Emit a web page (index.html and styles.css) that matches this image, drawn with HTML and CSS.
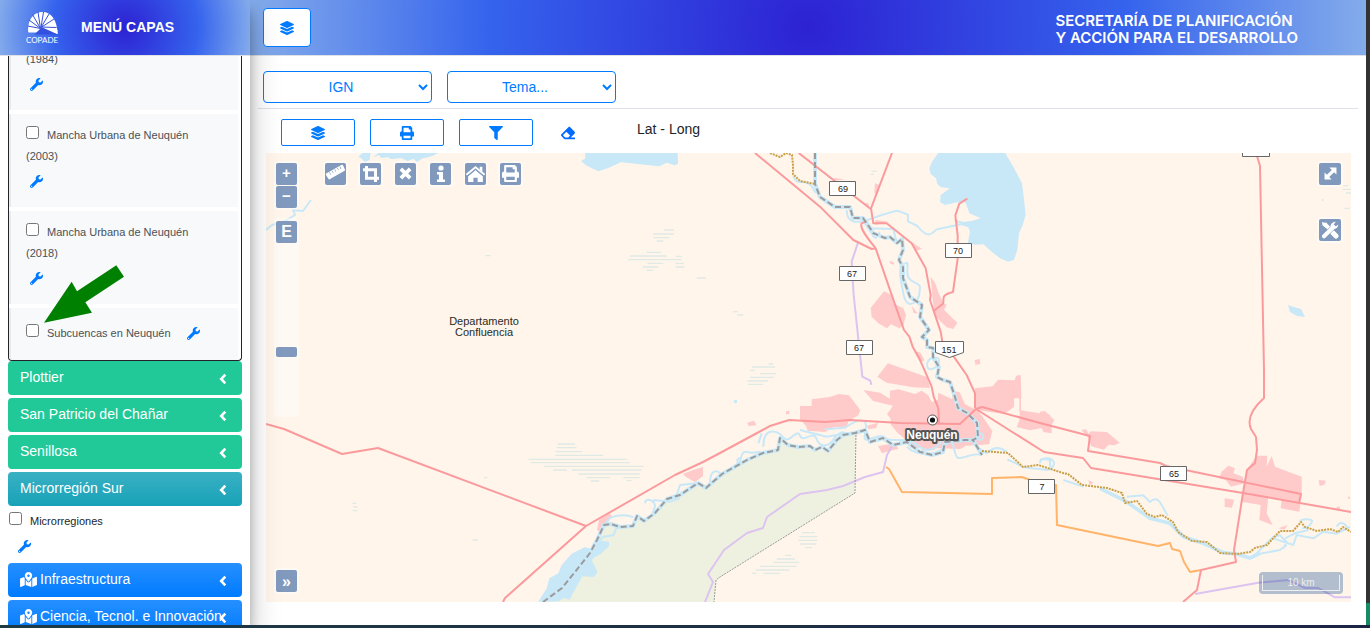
FILE: index.html
```html
<!DOCTYPE html>
<html lang="es">
<head>
<meta charset="utf-8">
<title>Menú capas</title>
<link rel="stylesheet" href="styles.css">
</head>
<body>
<svg class="sprite" aria-hidden="true">
  <symbol id="i-layers" viewBox="0 0 512 512"><path d="M12.41 148.02l232.94 105.67c6.8 3.09 14.49 3.09 21.29 0l232.94-105.67c16.55-7.51 16.55-32.52 0-40.03L266.65 2.31a25.607 25.607 0 0 0-21.29 0L12.41 107.98c-16.55 7.51-16.55 32.53 0 40.04zm487.18 88.28l-58.09-26.33-161.64 73.27c-7.56 3.43-15.59 5.17-23.86 5.17s-16.29-1.74-23.86-5.17L70.51 209.97l-58.1 26.33c-16.55 7.5-16.55 32.5 0 40l232.94 105.59c6.8 3.08 14.49 3.08 21.29 0L499.59 276.3c16.55-7.5 16.55-32.5 0-40zm0 127.8l-57.87-26.23-161.86 73.37c-7.56 3.43-15.59 5.17-23.86 5.17s-16.29-1.74-23.86-5.17L70.29 337.87 12.41 364.1c-16.55 7.5-16.55 32.5 0 40l232.94 105.59c6.8 3.08 14.49 3.08 21.29 0L499.59 404.1c16.55-7.5 16.55-32.5 0-40z"/></symbol>
  <symbol id="i-print" viewBox="0 0 512 512"><path fill-rule="evenodd" d="M448 192V77.25c0-8.49-3.37-16.62-9.37-22.63L393.37 9.37c-6-6-14.14-9.37-22.63-9.37H96C78.33 0 64 14.33 64 32v160c-35.35 0-64 28.65-64 64v112c0 8.84 7.16 16 16 16h48v96c0 17.67 14.33 32 32 32h320c17.67 0 32-14.33 32-32v-96h48c8.84 0 16-7.16 16-16V256c0-35.35-28.65-64-64-64zm-64 256H128v-96h256v96zm0-224H128V64h192v48c0 8.84 7.16 16 16 16h48v96z"/></symbol>
  <symbol id="i-filter" viewBox="0 0 512 512"><path d="M487.976 0H24.028C2.71 0-8.047 25.866 7.058 40.971L192 225.941V432c0 7.831 3.821 15.17 10.237 19.662l80 55.98C298.02 518.69 320 507.493 320 487.98V225.941l184.947-184.97C520.021 25.896 509.338 0 487.976 0z"/></symbol>
  <symbol id="i-wrench" viewBox="0 0 512 512"><path d="M507.73 109.1c-2.24-9.03-13.54-12.09-20.12-5.51l-74.36 74.36-67.88-11.31-11.31-67.88 74.36-74.36c6.62-6.62 3.43-17.9-5.66-20.16-47.38-11.74-99.55.91-136.58 37.93-39.64 39.64-50.55 97.1-34.05 147.2L18.74 402.76c-24.99 24.99-24.99 65.51 0 90.5 24.99 24.99 65.51 24.99 90.5 0l213.21-213.21c50.12 16.71 107.47 5.68 147.37-34.22 37.07-37.07 49.7-89.32 37.91-136.73zM64 472c-13.25 0-24-10.75-24-24 0-13.26 10.75-24 24-24s24 10.74 24 24c0 13.25-10.75 24-24 24z"/></symbol>
  <symbol id="i-marked" viewBox="0 0 576 512"><path d="M288 0c-69.59 0-126 56.41-126 126 0 56.26 82.35 158.8 113.9 196.02 6.39 7.54 17.82 7.54 24.2 0C331.65 284.8 414 182.26 414 126 414 56.41 357.59 0 288 0zm0 168c-23.2 0-42-18.8-42-42s18.8-42 42-42 42 18.8 42 42-18.8 42-42 42zM20.12 215.95A32.006 32.006 0 0 0 0 245.66v250.32c0 11.32 11.43 19.06 21.94 14.86L160 448V214.92c-8.84-15.98-16.07-31.54-21.25-46.42L20.12 215.95zM288 359.67c-14.07 0-27.38-6.18-36.51-16.96-19.66-23.2-40.57-49.62-59.49-76.72v182l192 64V266c-18.92 27.09-39.82 53.52-59.49 76.72-9.13 10.77-22.44 16.95-36.51 16.95zm266.06-198.51L416 224v288l139.88-55.95A31.996 31.996 0 0 0 576 426.34V176.02c0-11.32-11.43-19.06-21.94-14.86z"/></symbol>
  <symbol id="i-eraser" viewBox="0 0 512 512"><path fill-rule="evenodd" d="M497.941 273.941c18.745-18.745 18.745-49.137 0-67.882l-160-160c-18.745-18.745-49.136-18.746-67.883 0l-256 256c-18.745 18.745-18.745 49.137 0 67.882l96 96A48.004 48.004 0 0 0 144 480h356c6.627 0 12-5.373 12-12v-40c0-6.627-5.373-12-12-12H355.883l142.058-142.059zm-302.627-62.627l137.373 137.373L265.373 416H150.628l-80-80 124.686-124.686z"/></symbol>
  <symbol id="i-left" viewBox="0 0 8 12"><path d="M6.3 1.7 2.2 6l4.100 4.300" fill="none" stroke="currentColor" stroke-width="2.600"/></symbol>
  <symbol id="i-ruler" viewBox="0 0 22 22"><path fill-rule="evenodd" d="M.8 10.400 17.800.9a1 1 0 0 1 1.300.3l2.300 4.900a1 1 0 0 1-.4 1.300L4.600 16.800a1 1 0 0 1-1.300-.4L.4 11.700a1 1 0 0 1 .4-1.300zM4 9.300l1.400 2.600.6-.3-1.400-2.600zM7 7.600l1.200 2.200.6-.3-1.200-2.200zM9.800 6l1.400 2.600.6-.3-1.400-2.600zM12.700 4.400l1.200 2.200.6-.3-1.200-2.200zM15.400 2.900l1.400 2.600.6-.3-1.400-2.600z"/></symbol>
  <symbol id="i-crop" viewBox="0 0 18 18"><path d="M4.500 1v12.200H17M1 4.800h12.500V17" fill="none" stroke="currentColor" stroke-width="3"/></symbol>
  <symbol id="i-x" viewBox="0 0 14 14"><path d="M2 2l10 10M12 2 2 12" fill="none" stroke="currentColor" stroke-width="4"/></symbol>
  <symbol id="i-info" viewBox="0 0 12 18"><circle cx="6" cy="3" r="2.600"/><path d="M2 7h6v7.400h2V17H2v-2.600h2V9.600H2z"/></symbol>
  <symbol id="i-home" viewBox="0 0 20 17"><path d="M10 4.800 17 10.600V16h-5v-4H8v4H3v-5.400z"/><path d="M1.300 9.200 10 2l8.700 7.200" fill="none" stroke="currentColor" stroke-width="1.800"/><path d="M2.500 10.500 10 4.300l7.500 6.200" fill="none" stroke="#8099bd" stroke-width=".9"/><path d="M14 1.500h2.500v5L14 4.500z"/></symbol>
  <symbol id="i-expand" viewBox="0 0 12 12"><path d="M5 .5h6.500V7L9.300 4.800l-4.500 4.500L7 11.500H.5V5l2.200 2.200 4.500-4.500z"/></symbol>
  <symbol id="i-tools" viewBox="0 0 18 18"><path d="M3.500 2.500 15 15" fill="none" stroke="currentColor" stroke-width="4"/><path d="M12 12l3 3" fill="none" stroke="currentColor" stroke-width="5" stroke-linecap="round"/><path d="M1 1l3.500 1L6.500 6 5 7 1.600 4.500z"/><path d="M3 15.300 12 6.500" fill="none" stroke="#8099bd" stroke-width="5"/><path d="M3 15.300 12.500 6" fill="none" stroke="currentColor" stroke-width="4" stroke-linecap="round"/><path d="M14.800.7A5 5 0 0 0 9.800 7.500 5 5 0 0 0 17.300 3.500L14.600 5.600 12.700 3.500z"/></symbol>
</svg>

<div class="app">
  <aside class="sidebar">
    <header class="brand">
      <svg class="logo" viewBox="0 0 30 31" role="img" aria-label="COPADE">
        <path fill="#fff" d="M0 18.500C0 7 6 0 14.500 0 23 0 29.500 8 29.500 22L20 20.500H.5z"/>
        <path fill="#3450e0" d="M12.500 16.500 6.500 22.500H30L14.500 15.500z"/>
        <path fill="#fff" d="M14 13.500 29.500 18v4z"/>
        <g stroke="#3450e0" stroke-width="1"><path d="M12.500 16.500 0 14M12.500 16.500 1 8M12.500 16.500 4.500 2.500M12.500 16.500 10 0M13 15.500 15.500 0M13 15.500 21 2M13 15.500 26 7M13 15 28.500 15.500"/></g>
        <text x="14" y="31" text-anchor="middle" class="logo-text">COPADE</text>
      </svg>
      <h1 class="brand-name">MENÚ CAPAS</h1>
    </header>
    <nav class="menu">
      <ul class="panel">
        <li class="layer"><span class="cut">(1984)</span><button class="tool" aria-label="Opciones"><svg><use href="#i-wrench"/></svg></button></li>
        <li class="layer"><label><input type="checkbox">Mancha Urbana de Neuquén (2003)</label><button class="tool" aria-label="Opciones"><svg><use href="#i-wrench"/></svg></button></li>
        <li class="layer"><label><input type="checkbox">Mancha Urbana de Neuquén (2018)</label><button class="tool" aria-label="Opciones"><svg><use href="#i-wrench"/></svg></button></li>
        <li class="layer layer-inline"><label><input type="checkbox">Subcuencas en Neuquén</label><button class="tool" aria-label="Opciones"><svg><use href="#i-wrench"/></svg></button>
          <svg class="arrow" viewBox="0 0 240 174" aria-hidden="true"><path fill="#008000" d="M0 173 83 50l16 29L217 1l23 34-116 77 20 31z"/></svg>
        </li>
      </ul>
      <button class="group teal">Plottier<svg class="chev"><use href="#i-left"/></svg></button>
      <button class="group teal">San Patricio del Chañar<svg class="chev"><use href="#i-left"/></svg></button>
      <button class="group teal">Senillosa<svg class="chev"><use href="#i-left"/></svg></button>
      <button class="group info">Microrregión Sur<svg class="chev"><use href="#i-left"/></svg></button>
      <div class="loose"><label><input type="checkbox">Microrregiones</label><button class="tool" aria-label="Opciones"><svg><use href="#i-wrench"/></svg></button></div>
      <button class="group primary"><svg class="mark"><use href="#i-marked"/></svg>Infraestructura<svg class="chev"><use href="#i-left"/></svg></button>
      <button class="group primary"><svg class="mark"><use href="#i-marked"/></svg>Ciencia, Tecnol. e Innovación<svg class="chev"><use href="#i-left"/></svg></button>
    </nav>
  </aside>

  <main class="main">
    <header class="topbar">
      <button class="toggle" aria-label="Capas"><svg><use href="#i-layers"/></svg></button>
      <p class="agency">SECRETARÍA DE PLANIFICACIÓN<br>Y ACCIÓN PARA EL DESARROLLO</p>
    </header>
    <div class="selects">
      <select aria-label="Mapa base"><option>IGN</option></select>
      <select aria-label="Tema"><option>Tema...</option></select>
    </div>
    <div class="actions">
      <button class="act" aria-label="Capas"><svg><use href="#i-layers"/></svg></button>
      <button class="act" aria-label="Imprimir"><svg><use href="#i-print"/></svg></button>
      <button class="act" aria-label="Filtrar"><svg><use href="#i-filter"/></svg></button>
      <button class="erase" aria-label="Borrar"><svg><use href="#i-eraser"/></svg></button>
      <span class="coords">Lat - Long</span>
    </div>
    <section class="map" aria-label="Mapa">
      <svg class="canvas" viewBox="266 153 1085 449" preserveAspectRatio="xMinYMin slice">
        <defs>
          <path id="limit-north" d="M815 153V184L820 197 835 207 850 207 853 218 863 218 870 228 873 233 885 238 890 237 897 243 902 239 903 250 899 260 903 267 903 278 910 297 922 305 920 317 929 330 922 337 927 340 927 347 933 348 933 357 939 367 937 377 943 380 950 382 955 397 958 408 967 413 977 423 978 437 973 440 982 455"/>
          <path id="limit-south" d="M543 602 562 588 575 572 590 553 597 540 604 525 611 524 620 527 633 526 637 516 644 521 655 513 667 499 680 495 698 483 706 488 722 474 747 460 763 453 778 450 780 438 788 445 798 447 810 446 815 450 822 447 828 451 837 440 843 435 855 433 865 430 870 442 883 438 893 445 907 442 920 452 932 455 943 452 945 442 965 440 973 440"/>
          <path id="limit-east" d="M982 451 1008 453 1023 467 1038 465 1063 473 1068 474 1082 485 1107 488 1122 493 1125 503 1137 501 1147 514 1155 517 1162 515 1173 522 1178 532 1192 541 1207 542 1220 553 1237 554 1250 552 1255 548 1267 545 1280 531 1293 531 1301 522 1305 527 1317 531 1330 529 1338 532 1343 527 1351 532"/>
        </defs>
        <path class="green" d="M543 602 562 588 575 572 590 553 597 540 604 525 620 527 634 526 637 516 644 521 655 513 667 499 680 495 698 483 706 488 722 474 747 460 763 453 778 450 780 438 798 447 815 450 828 451 837 440 843 435 856 432 855 493 720 577 716 580 714 602z"/>
        <g class="marsh" transform="translate(260 400) scale(.333333)"><path d="M893 132h52M890 143h60M886 155h80M886 166h144M806 178h296M812 188h297M853 199h298M880 210h40M935 210h210M955 222h184M980 233h70M1090 233h50M992 243h26M1100 242h15M277 310h12M280 321h12M278 332h14M638 420h16M672 233h10"/></g>
        <g class="marsh" transform="translate(260 150) scale(.333333)"><path d="M1212 240h30M1180 252h62M1180 263h48M1190 273h20M1160 307h44M1110 318h110M1248 319h18M1105 329h160M1162 340h48M1246 340h26M1148 351h48M1246 351h28M1160 361h20M1310 384h28M676 317h16M1420 485h12"/></g>
        <g class="marsh" transform="translate(720 340) scale(.333333)"><path d="M145 72h15M95 81h70M90 91h15M120 101h48M90 112h72M82 123h62M85 133h45M245 578h40M238 590h54M235 601h58M240 612h50M255 623h22M195 646h20M170 657h55M160 667h78M120 679h110M108 690h100M95 700h15M130 700h50"/></g>
        <g class="marsh" transform="translate(1000 0) scale(.333333)"><path d="M1030 557h15M1028 568h25M1038 579h15M1033 625h16M964 600h8"/></g>
        <g class="marsh" transform="translate(720 150) scale(.333333)"><path d="M455 64h15M452 73h10M40 485h12M52 495h18"/></g>
        <g class="water">
          <path transform="translate(260 150) scale(.333333)" d="M975 9h278l1 32-10 5-24-8-22 11-115-12-40 18-28 9-35-17-17-14 13-8zM295 20l12-11h25l-3 20-14 9-9-12zM355 9h180l-20 10-30 7-14 11-10-11-18 7-20-9-28 4-12-6-20 2-6-9-20 8z"/>
          <path transform="translate(720 150) scale(.333333)" d="M655 9 636 35 628 55 632 72 648 85 652 102 663 112 690 115 662 135 660 156 675 165 712 157 735 155 742 172 748 190 782 205 758 212 735 215 722 225 745 232 750 246 743 280 765 284 790 283 815 305 840 325 865 335 882 330 892 300 897 250 908 225 917 195 911 140 906 100 880 50 862 20 856 9z"/>
          <path transform="translate(260 400) scale(.333333)" d="M835 605l25-40 8-30 27-15 10-25 30-34 40-20 10 4 12 0 20-24 30 4 0 14-26 24-16 8-10 10 18 36-12 14-34-2-28 50-10 20-20-5-12 10z"/>
          <path d="M1288 305l6 2 7 2 4 8-8-1-7-4zM734 400h3v3h-3z"/>
        </g>
        <g class="urban">
          <path transform="translate(720 150) scale(.333333)" d="M452 474l40-50 22 10 6 26 30 15 8 20-8 32-12 8-25-12-12 12-26-15-20-20zM632 380l14 20 10 30 14 30 10 4-8 15 40 40-12 18-20-5-35-34-7-50zM472 680l32-40 118 42 8 32-50-2-80-14zM764 630l15-3 2 15-15 2zM582 605l18 2 14 25-16 2zM508 332l15 6-2 6-10-3zM578 278l28 18-20 8zM432 218l22 12-2 18zM340 84l35 4-30 4zM465 100l14 5-6 28-10-4zM466 210l40 5-40 10zM575 468l18 22-12 0zM432 160l14 0 0 14zM537 348l10 0-3 10zM702 208l12 2 0 14z"/>
          <path transform="translate(720 340) scale(.333333)" d="M240 198l35 0 0-20 54-7 28-9 30 4 34 44-6 16-30 18-4 16-40 2-26 14-52-4-5-14-18-20zM430 150l50 8 30 18 0-24 25-4 50 14 20-10 20 14 10 20 18-6 2-22 42 20 0-26 22 5 16 36 40 20 22 30 20 30-10 40-70 4-16 10-60-2-90-2-14-24-24-20-20-24-2-20-10-12 18-26-60-14zM474 318l50-8 12 16-30 8-20 6zM764 145l54-6 16-20 50 2 4-14 14-2 2 56 0 14-22 0 0 26-20 14-14 6-84-12zM900 210l20 4 70 10v35l-60 12-40-10 8-20zM82 248l20-6 8 14-24 2zM198 213h10v10h-10zM440 258l34-10-6 16-22 4zM605 320l40-4 0 14-40 2zM898 155h5v60h-5z"/>
          <path transform="translate(1040 370) scale(.333333)" d="M0 125l15-2 28 28-8 14 0 25-25-4-10-25zM124 180l14-2 8 14 5-8 50 2 38 32-15 8-18-2-14 15-38-10-12-30zM545 305l20-18 20 8-5 15 28 10 5 20-40 10-16-20-20-5zM620 300 650 257 682 257 680 290 695 258 705 290 785 320 785 370 778 425 722 415 725 390 685 380 680 430 698 465 658 450 662 405 605 395zM554 385l28 4-6 24-22-2zM836 330l22 2-5 12-14 4zM145 330l16 8-12 8zM715 475l28-10-10 14zM890 410h10v8h-10zM924 380h6v6h-6z"/>
          <path d="M597 530l2-10 11-7 2 4-8 10-4 5zM683 474l10-4 10-3 0 9-8 6-9-5z"/>
        </g>
        <g class="river">
          <use href="#limit-north"/><use href="#limit-south"/>
          <path d="M266 230 272 225 285 221 295 215 293 210 303 211 311 200"/>
          <g transform="translate(720 150) scale(.333333)">
            <path d="M220 78c10 30 30 10 48 24s10 20 20 26M380 180c0 40 30 40 62 30s50-20 90-28l32 12v20l28 14c40 50 50 10 60 10l70-15 60-12M420 200l36 50c10 30 20 0 24-4M445 235l75 2 10 40M545 340c-10 30 0 60 5 90s20 40 36 24 10-20 14-40-40-10-38-50 0-20-12-24M655 625c-30-10-40 20-30 30s40-10 30-30M715 215l45 10 20-12"/>
          </g>
          <g transform="translate(720 340) scale(.333333)">
            <path d="M0 410l60-45c10-50 20-20 50-28s-10 20 30-4M115 310l10-30M130 320c0-60 40-50 60-28s40-30 50-5 40-20 50 10 40 20 50 2 30-30 40-15M240 270l80 20 60-10M315 268l60-5c60-40 70-20 60 20s40-10 60 10 60-10 100 24 70-10 80-30M560 320c30 30 100 30 120-10s20 40 34 44 50-20 70-8M775 280c20 0 20 20 0 20M770 320l30 20M800 340c20-20 40-20 60-5M862 358l50 24 70 8M960 370c0-20 20-10 30-10v20"/>
          </g>
          <g transform="translate(1040 370) scale(.333333)">
            <path d="M0 270c40-20 60 20 20 30M70 330l60 20M260 380l50-4 20 20c30-30 40 30 54 40M640 560l60-60 20-4 20 20-10 20M640 555l80-15 20-15M700 505l60 20 10-30 50 10 30-20 40 6 40-20M735 505l30-15 40-10M780 455c0-10 40-10 36 0s-10 20-30 20M890 470c10-20 30-10 34 10"/>
            <path class="fat" d="M180 355l80 40 70 50 60 15 40 40 60 20 60 28 40 4 40 12 30-14"/>
          </g>
          <g transform="translate(260 400) scale(.333333)">
            <path d="M1040 372c0-30 60-30 80-20M1000 440l30-30 30-4 10-24M1155 310c0-20 30-10 30 10l-8 20M1180 300l50 5 30-10M1250 285l10-30 50-5M1350 250c0-50 30-40 36-20M1435 200l-3-20 8-8"/>
          </g>
        </g>
        <g class="purple">
          <path transform="translate(720 150) scale(.333333)" d="M415 275l-20 60 6 100 26 245 24 12 3 12"/>
          <path d="M892 446 887 455 883 472 865 477 843 486 827 490 800 494 767 517 763 528 747 533 724 550 708 574 713 582 705 602"/>
          <path transform="translate(1040 370) scale(.333333)" d="M465 672l190-34 90-8 50 24 40 0 50 28h48"/>
        </g>
        <g class="orange"><path d="M886 467 889 469 902 492 992 494 992 478 1022 477 1030 480 1056 485 1057 525 1158 546 1170 543 1172 549 1180 551 1184 562 1190 572 1201 570"/></g>
        <g class="red">
          <path d="M266 424 284 429 342 454 378 448 586 526 675 475 703 462 720 453 770 426 789 420 825 422 850 420 900 423 960 424 976 409 982 407 1040 423 1090 436 1088 451 1160 463 1166 466 1301 494 1299 503M976 409 1044 452 1083 458 1091 468 1243 493 1351 512M586 526 505 598 503 602"/>
          <path transform="translate(720 150) scale(.333333)" d="M105 9 300 170 400 270 455 297 467 295 522 455 552 540 568 560 578 590 598 625 635 710 641 740 655 775 657 820M467 295c-20-25-50-60-42-75l12-5M236 9 456 180M516 9 453 175 460 220 500 220 575 280 617 355 632 435 630 450 662 545 667 575 705 625 740 675 765 730V775M742 146l-24 15-12 35 7 60v70l-14 100c-40 10-25 20-30 35l-28 22"/>
          <path d="M1257 156 1260 166 1264 370V398Q1245 415 1251 429L1256 437 1257 450 1255 463 1247 470 1243 493 1234 550 1236 562 1201 570 1197 590 1183 602"/>
        </g>
        <g class="limit">
          <path class="gold" d="M770 153 780 157 786 153 792 155 793 165 793 174 800 181 815 184"/>
          <use href="#limit-east" class="gold"/>
          <use href="#limit-north"/><use href="#limit-south"/>
          <path class="dots" d="M856 432l-1 61-135 84-4 3-2 22"/>
        </g>
        <g class="shield">
          <path d="M829.500 181.500h26v14h-26zM945.500 243.500h26v14h-26zM839.500 266.500h26v14h-26zM846.500 340.500h26v14h-26zM1160.500 466.500h26v14h-26zM1028.500 479.500h26v14h-26zM1242.500 142.500h27v14h-27zM935.500 341.500h28v11l-14 5-14-5z"/>
          <text x="843" y="192">69</text><text x="958" y="254">70</text><text x="852" y="277">67</text><text x="859" y="351">67</text><text x="949" y="353">151</text><text x="1174" y="477">65</text><text x="1042" y="490">7</text>
        </g>
        <circle cx="932.500" cy="420" r="5" fill="#fff" stroke="#555"/><circle cx="932.500" cy="420" r="2.600" fill="#111"/>
        <text class="city" x="932" y="439">Neuquén</text>
        <text class="dept" x="484" y="325">Departamento</text><text class="dept" x="484" y="336">Confluencia</text>
      </svg>
      <div class="left-controls">
        <div class="ctl"><button aria-label="Acercar">+</button><button aria-label="Alejar">−</button></div>
        <div class="slider"><button>E</button><span class="thumb"></span></div>
      </div>
      <div class="tools">
        <div class="ctl"><button aria-label="Medir"><svg class="wide"><use href="#i-ruler"/></svg></button></div>
        <div class="ctl"><button aria-label="Recortar"><svg><use href="#i-crop"/></svg></button></div>
        <div class="ctl"><button aria-label="Limpiar"><svg class="small"><use href="#i-x"/></svg></button></div>
        <div class="ctl"><button aria-label="Información"><svg><use href="#i-info"/></svg></button></div>
        <div class="ctl"><button aria-label="Inicio"><svg class="wide"><use href="#i-home"/></svg></button></div>
        <div class="ctl"><button aria-label="Imprimir mapa"><svg class="print"><use href="#i-print"/></svg></button></div>
      </div>
      <div class="right-controls">
        <div class="ctl"><button aria-label="Pantalla completa"><svg class="small"><use href="#i-expand"/></svg></button></div>
        <div class="ctl"><button aria-label="Herramientas"><svg><use href="#i-tools"/></svg></button></div>
      </div>
      <div class="ctl overview"><button aria-label="Vista general">»</button></div>
      <div class="scale"><span>10 km</span></div>
    </section>
  </main>
  <div class="edge"></div>
  <div class="foot"></div>
</div>
</body>
</html>
```
FILE: styles.css
```css
* { box-sizing: border-box; }
body {
  margin: 0;
  font: 14px/21px "Liberation Sans", Arial, sans-serif;
  color: #212529;
  background: #fff;
}
button { font: inherit; color: inherit; padding: 0; border: 0; background: none; }
svg { fill: currentColor; }
.sprite { display: none; }

.app {
  display: grid;
  grid-template: minmax(0, 1fr) 3px / 250px minmax(0, 1fr) 4px;
  height: 100vh;
  overflow: hidden;
}
.edge { background: linear-gradient(#333 0 603px, #178a62 603px); }
.foot { grid-column: 1 / -1; background: linear-gradient(90deg, #1d3b45, #1c2444); z-index: 3; }

/* Sidebar */
.sidebar {
  display: flex;
  flex-direction: column;
  min-height: 0;
  background: #fff;
  z-index: 2;
  box-shadow: 0 14px 28px rgba(0, 0, 0, .25), 0 10px 10px rgba(0, 0, 0, .22);
}
.brand, .topbar {
  flex: none;
  display: flex;
  align-items: center;
  height: 56px;
  border-bottom: 1px solid #dee2e6;
  background: radial-gradient(circle, #2d22d3 0%, #3563ed 57%, #84aceb 100%);
}
.brand { padding: 0 0 1px 28px; gap: 23px; }
.logo { width: 30px; height: 31px; overflow: visible; }
.logo-text { font: 8px Lato, sans-serif; fill: #fff; }
.brand-name { margin: 0; color: #fff; font-size: 14px; line-height: 21px; }
.menu { flex: 1; min-height: 0; overflow: hidden; padding: 0 8px; }
.panel {
  list-style: none;
  margin: 0;
  padding: 0 3px 0 0;
  border: 1px solid #212529;
  border-top: 0;
  border-radius: 0 0 4px 4px;
}
.layer {
  position: relative;
  min-height: 93px;
  padding: 11px 16px 12px 15px;
  border-left: 2px solid #e9ecef;
  background: #f8f9fa;
  color: #495057;
  font-size: 11px;
}
.layer + .layer { margin-top: 4px; }
.layer:first-child { min-height: 61px; padding-top: 0; }
.cut { display: block; margin-top: -7px; }
.layer label { display: block; }
.layer input, .loose input { width: 13px; height: 13px; margin: 0 8px 0 0; vertical-align: 0; }
.tool { display: block; margin: 4px 0 0 4px; color: #007bff; line-height: 21px; }
.tool svg { display: block; width: 13px; height: 21px; }
.layer-inline { display: flex; align-items: flex-start; min-height: 52px; padding-top: 15px; border-radius: 0 0 0 4px; }
.layer-inline .tool { margin: 0 0 0 16px; }
.arrow { position: absolute; left: 33px; top: -43px; width: 80px; height: 58px; }
.group {
  position: relative;
  display: flex;
  align-items: center;
  gap: 3px;
  width: 100%;
  height: 34px;
  margin-bottom: 3px;
  padding: 0 12px 1px;
  border-radius: 4px;
  color: #fff;
  white-space: nowrap;
}
.teal { background: #22c998; }
.info { background: linear-gradient(#3ab0c3, #17a2b8); }
.primary { background: linear-gradient(#268fff, #007bff); }
.chev { position: absolute; right: 15px; top: 12px; width: 8px; height: 12px; }
.mark { width: 17px; height: 15px; flex: none; }
.loose { padding: 2px 1px 6px; font-size: 11px; }
.loose label { display: block; }
.loose .tool { margin-left: 9px; }

/* Main column */
.main { display: flex; flex-direction: column; min-width: 0; min-height: 0; }
.topbar { justify-content: space-between; padding: 0 68px 0 13px; }
.toggle {
  display: grid;
  place-items: center;
  width: 48px;
  height: 39px;
  border: 1px solid #007bff;
  border-radius: 4px;
  background: #fff;
  color: #007bff;
}
.toggle svg, .act svg, .erase svg { width: 14px; height: 14px; }
.agency { margin: 0; padding-top: 3px; color: #fff; font: 600 15px/17px Inter, "Open Sans", sans-serif; }
.selects {
  display: flex;
  gap: 15px;
  margin: 0 8px;
  padding: 15px 5px 5px;
  border-bottom: 1px solid #dee2e6;
}
.selects select {
  width: 169px;
  height: 32px;
  padding: 0 1px 0 0;
  border: 1px solid #007bff;
  border-radius: 4px;
  background: #fff;
  color: #007bff;
  font: inherit;
  text-align: center;
  text-align-last: center;
}
.actions { display: flex; gap: 15px; padding: 10px 31px 7px; }
.act {
  display: grid;
  place-items: center;
  width: 74px;
  height: 27px;
  border: 1px solid #007bff;
  border-radius: 2px;
  color: #007bff;
}
.erase { margin: 5px 0 0 13px; color: #0069ff; }
.coords { margin-left: 47px; }

/* Map */
.map { position: relative; flex: 1; min-height: 0; margin: 0 15px 23px 16px; background: #fff5eb; overflow: hidden; }
.canvas { display: block; width: 100%; height: 100%; fill: none; }
.green { fill: #eef1e0; }
.marsh { stroke: #dfeae5; stroke-width: 4; }
.water { fill: #c8e8f8; }
.urban { fill: #ffcaca; }
.river { stroke: #c8e8f8; stroke-width: 2; stroke-linejoin: round; }
.river use { stroke-width: 4; }
.river g { stroke-width: 6; }
.river .fat { stroke-width: 11; }
.purple, .orange, .red { stroke-width: 2; stroke-linejoin: round; }
.purple [transform], .red [transform] { stroke-width: 6; }
.purple { stroke: #dcc3f0; }
.orange { stroke: #ffb469; }
.red { stroke: #fb9a9c; }
.limit { stroke: #9b9b9b; stroke-width: 2; stroke-dasharray: 6 3; stroke-linejoin: round; }
.limit .gold { stroke: #c9a048; stroke-dasharray: 2 1; }
.limit .dots { stroke-width: 1; stroke-dasharray: 2 1; }
.shield { fill: #fff; stroke: #666; }
.shield text { fill: #222; stroke: none; font-size: 9px; text-anchor: middle; }
.city { fill: #fff; stroke: #555; stroke-width: 4; stroke-linejoin: round; paint-order: stroke; font-size: 12px; font-weight: 700; text-anchor: middle; }
.dept { fill: #2b2b22; font-size: 11px; text-anchor: middle; }

.ctl { padding: 2px; border-radius: 4px; background: rgba(255, 255, 255, .4); }
.ctl button, .slider button {
  display: grid;
  place-items: center;
  width: 21px;
  height: 22px;
  border-radius: 2px;
  background: #8099bd;
  color: #fff;
  font-size: 16px;
  font-weight: 700;
}
.ctl button + button { margin-top: 1px; }
.ctl svg { width: 18px; height: 18px; }
.ctl .wide { width: 21px; height: 20px; }
.ctl .small { width: 13px; height: 13px; }
.ctl .print { width: 17px; height: 17px; }
.left-controls { position: absolute; left: 8px; top: 8px; }
.left-controls .ctl button { font-size: 15px; line-height: 20px; padding-bottom: 2px; }
.slider { height: 199px; margin-top: 8px; padding: 3px 2px; border-radius: 4px; background: rgba(255, 255, 255, .4); }
.slider button { padding-bottom: 2px; }
.thumb { display: block; width: 21px; height: 10px; margin-top: 104px; border-radius: 2px; background: #8099bd; }
.tools { position: absolute; left: 57px; top: 8px; display: flex; gap: 10px; }
.tools button { padding-bottom: 1px; }
.right-controls { position: absolute; right: 8px; top: 8px; display: grid; gap: 30px; }
.right-controls button { width: 22px; padding-bottom: 1px; }
.overview { position: absolute; left: 8px; bottom: 8px; }
.scale { position: absolute; right: 8px; bottom: 8px; width: 84px; padding: 3px; border-radius: 4px; background: rgba(0, 60, 136, .3); }
.scale span { display: block; border: 1px solid #eee; border-top: 0; color: #eee; font-size: 10px; line-height: 15px; text-align: center; }
```
